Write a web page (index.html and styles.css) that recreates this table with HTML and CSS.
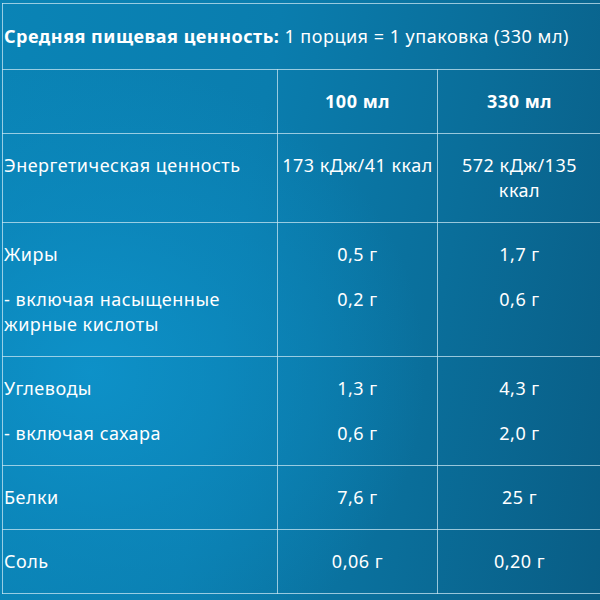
FILE: index.html
```html
<!DOCTYPE html>
<html lang="ru">
<head>
<meta charset="utf-8">
<title>Пищевая ценность</title>
<link rel="stylesheet" href="styles.css">
</head>
<body>
<table class="nutri">
  <colgroup>
    <col class="c-name">
    <col class="c-100">
    <col class="c-330">
  </colgroup>
  <tr>
    <td class="title" colspan="3"><b>Средняя пищевая ценность:</b> 1 порция = 1 упаковка (330 мл)</td>
  </tr>
  <tr class="head">
    <td class="name"></td>
    <td class="val">100 мл</td>
    <td class="val">330 мл</td>
  </tr>
  <tr>
    <td class="name"><p>Энергетическая ценность</p></td>
    <td class="val"><p>173 кДж/41 ккал</p></td>
    <td class="val"><p>572 кДж/135 ккал</p></td>
  </tr>
  <tr>
    <td class="name"><p>Жиры</p><p>- включая насыщенные жирные кислоты</p></td>
    <td class="val"><p>0,5 г</p><p>0,2 г</p></td>
    <td class="val"><p>1,7 г</p><p>0,6 г</p></td>
  </tr>
  <tr>
    <td class="name"><p>Углеводы</p><p>- включая сахара</p></td>
    <td class="val"><p>1,3 г</p><p>0,6 г</p></td>
    <td class="val"><p>4,3 г</p><p>2,0 г</p></td>
  </tr>
  <tr>
    <td class="name"><p>Белки</p></td>
    <td class="val"><p>7,6 г</p></td>
    <td class="val"><p>25 г</p></td>
  </tr>
  <tr>
    <td class="name"><p>Соль</p></td>
    <td class="val"><p>0,06 г</p></td>
    <td class="val"><p>0,20 г</p></td>
  </tr>
</table>
</body>
</html>
```
FILE: styles.css
```css
html, body {
  margin: 0;
  padding: 0;
  height: 100%;
}
body {
  background:
    radial-gradient(ellipse 70% 65% at 15% 62%, rgba(14,148,204,0.85) 0%, rgba(13,140,194,0.55) 40%, rgba(12,120,170,0) 80%),
    linear-gradient(100deg, #0a84b6 0%, #0a7dae 40%, #0a6e9a 70%, #095d85 100%);
  font-family: "Noto Sans", "DejaVu Sans", sans-serif;
  color: #ffffff;
  font-size: 18px;
  letter-spacing: 0.5px;
  line-height: 25px;
  padding-top: 3px;
  padding-left: 2px;
  box-sizing: border-box;
  overflow: hidden;
}
.nutri {
  border-collapse: collapse;
  width: 599px;
  table-layout: fixed;
}
.c-name { width: 275px; }
.c-100 { width: 160px; }
.c-330 { width: 164px; }
.nutri td {
  border: 1px solid rgba(200, 230, 242, 0.75);
  vertical-align: top;
  padding: 19px 0;
}
.nutri p {
  margin: 0;
}
.nutri p + p {
  margin-top: 20px;
}
.nutri td.title {
  padding: 20px 0 20px 1px;
}
.nutri td.name {
  text-align: left;
  padding-left: 1px;
}
.nutri td.val {
  text-align: center;
  padding-left: 4px;
  padding-right: 4px;
}
.head td {
  font-weight: bold;
}
```
